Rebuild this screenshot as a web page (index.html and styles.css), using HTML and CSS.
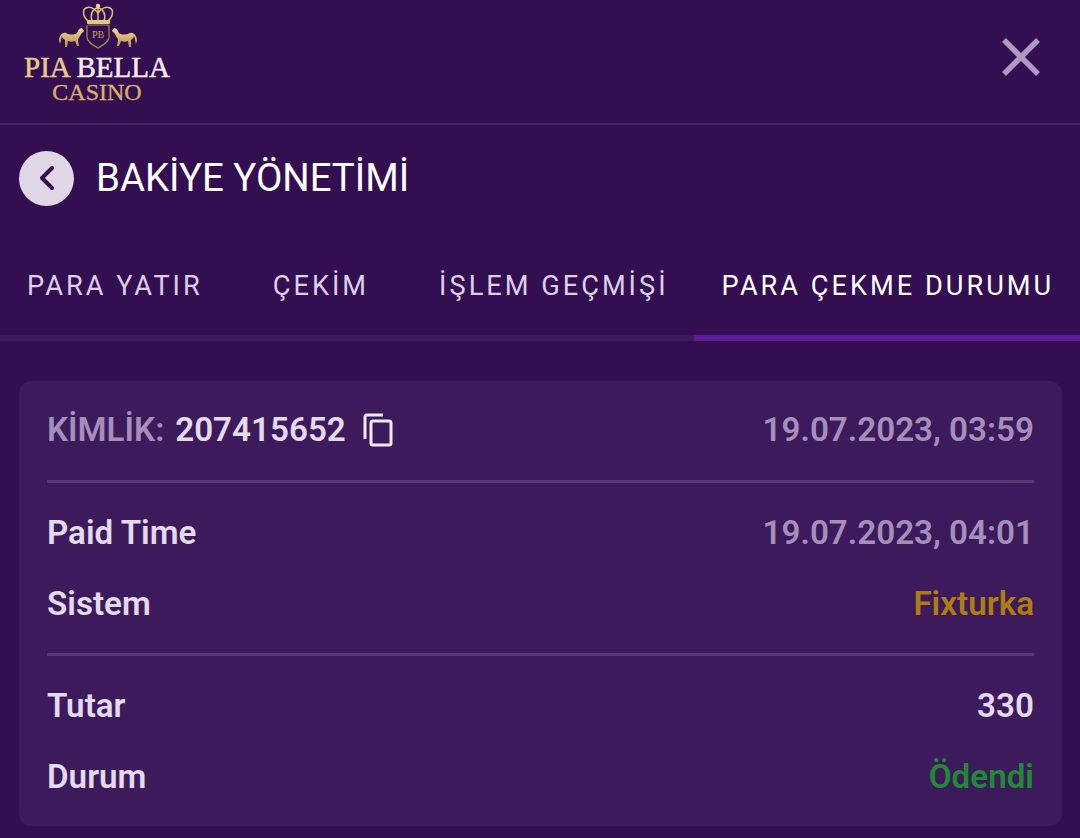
FILE: index.html
```html
<!DOCTYPE html>
<html lang="tr">
<head>
<meta charset="utf-8">
<title>Bakiye Yönetimi</title>
<link rel="stylesheet" href="styles.css">
</head>
<body>
<header class="top">
  <svg class="logo" width="190" height="106" viewBox="0 0 190 106">
    <defs>
      <linearGradient id="gold" x1="0" y1="0" x2="0" y2="1">
        <stop offset="0" stop-color="#f3d592"/>
        <stop offset="1" stop-color="#b98f4c"/>
      </linearGradient>
    </defs>
    <g fill="none" stroke="#e2bd74" stroke-width="1.5">
      <path d="M88 21 C83 17 82 10 86 8 C90 6 94 8 98 13 C102 8 106 6 110 8 C114 10 113 17 108 21"/>
      <path d="M92 21 C90 15 92 9 98 8 C104 9 106 15 104 21"/>
      <path d="M98 21 V8"/>
      <path d="M88 25 H109 V37 C109 42 103 45 98 48 C93 45 87 42 87 37 V25" stroke="#a98548" stroke-width="1.2"/>
    </g>
    <circle cx="98" cy="6" r="2.2" fill="#f0cf8a"/>
    <rect x="87" y="20" width="23" height="4" rx="1" fill="#e9c67f"/>
    <text class="logo-pb" x="98" y="38" text-anchor="middle">PB</text>
    <path fill="url(#gold)" d="M59 41 C59 36 62 32 66 33 C70 35 74 35 77 33 C78 31 79 28 82 28 L84 31 L81 34 C80 37 78 38 78 40 L79 46 L77 46 L75 41 C72 42 70 42 68 41 L67 47 L65 47 L65 40 C63 39 62 37 62 36 C61 38 61 42 60 44 Z"/>
    <path fill="url(#gold)" d="M137 41 C137 36 134 32 130 33 C126 35 122 35 119 33 C118 31 117 28 114 28 L112 31 L115 34 C116 37 118 38 118 40 L117 46 L119 46 L121 41 C124 42 126 42 128 41 L129 47 L131 47 L131 40 C133 39 134 37 134 36 C135 38 135 42 136 44 Z"/>
    <text class="logo-main" x="24" y="77"><tspan class="gold">PIA</tspan> <tspan class="white">BELLA</tspan></text>
    <text class="logo-sub" x="97" y="100" text-anchor="middle">CASINO</text>
  </svg>
  <svg class="close" width="40" height="40" viewBox="0 0 40 40">
    <path d="M3 3 L37 37 M37 3 L3 37" stroke="#ae9ac2" stroke-width="5.5" fill="none"/>
  </svg>
</header>

<div class="title-row">
  <span class="back">
    <svg width="24" height="30" viewBox="0 0 24 30">
      <path d="M17 5 L7 15 L17 25" stroke="#330f52" stroke-width="4" stroke-linecap="round" stroke-linejoin="round" fill="none"/>
    </svg>
  </span>
  <h1 class="title">BAKİYE YÖNETİMİ</h1>
</div>

<nav class="tabs">
  <span class="tab tab-first">PARA YATIR</span>
  <span class="tab tab-mid">ÇEKİM</span>
  <span class="tab tab-third">İŞLEM GEÇMİŞİ</span>
  <span class="tab tab-active">PARA ÇEKME DURUMU</span>
</nav>

<main class="card">
  <section class="group group-head">
    <div class="row">
      <span class="id-wrap">
        <span class="muted">KİMLİK:</span>
        <span class="light">207415652</span>
        <svg class="copy" width="30" height="34" viewBox="0 0 30 34">
          <path d="M2 26 V4 Q2 2 4 2 H20" fill="none" stroke="#f1eaf6" stroke-width="3"/>
          <rect x="8" y="8" width="20" height="24" rx="2" fill="none" stroke="#f1eaf6" stroke-width="3"/>
        </svg>
      </span>
      <span class="muted">19.07.2023, 03:59</span>
    </div>
  </section>
  <section class="group">
    <div class="row">
      <span class="light">Paid Time</span>
      <span class="muted">19.07.2023, 04:01</span>
    </div>
    <div class="row">
      <span class="light">Sistem</span>
      <span class="amber">Fixturka</span>
    </div>
  </section>
  <section class="group group-last">
    <div class="row">
      <span class="light">Tutar</span>
      <span class="light">330</span>
    </div>
    <div class="row">
      <span class="light">Durum</span>
      <span class="green">Ödendi</span>
    </div>
  </section>
</main>
</body>
</html>
```
FILE: styles.css
```css
* { box-sizing: border-box; }
html, body { margin: 0; height: 100%; }
body {
  background: #330f52;
  font-family: Roboto, "Liberation Sans", sans-serif;
  width: 1080px;
  height: 838px;
  overflow: hidden;
}
.top {
  height: 125px;
  border-bottom: 2px solid #47265f;
  display: flex;
  justify-content: space-between;
  align-items: flex-start;
  padding: 0 39px 0 0;
}
.logo { display: block; }
.logo-main { font-family: "Liberation Serif", serif; font-size: 29px; stroke-width: 0.5px; }
.gold { fill: #e8c98c; stroke: #e8c98c; }
.white { fill: #f4ecf4; stroke: #f4ecf4; }
.logo-sub { font-family: "Liberation Serif", serif; font-size: 24px; fill: #d9b06a; stroke: #d9b06a; stroke-width: 0.3px; }
.logo-pb { font-family: "Liberation Serif", serif; font-size: 10px; fill: #c7a263; }
.close { margin-top: 37px; }
.title-row {
  display: flex;
  align-items: center;
  gap: 22px;
  padding: 25px 0 0 19px;
  height: 81px;
}
.back {
  width: 55px;
  height: 55px;
  border-radius: 50%;
  background: #dfd6e6;
  display: flex;
  align-items: center;
  justify-content: center;
}
.title {
  margin: 0;
  font-size: 38.4px;
  font-weight: 400;
  color: #fff;
  line-height: 56px;
}
.tabs {
  display: flex;
  margin-top: 30px;
  height: 105px;
}
.tab {
  height: 105px;
  padding-top: 21px;
  line-height: 58px;
  font-size: 27.2px;
  letter-spacing: 3px;
  color: #dccfe8;
  border-bottom: 6px solid #3d1c5b;
  white-space: nowrap;
}
.tab-first { padding-left: 27px; padding-right: 34px; }
.tab-mid { padding-left: 36px; padding-right: 34px; }
.tab-third { padding-left: 36px; padding-right: 25px; }
.tab-active {
  flex: 1;
  padding-left: 28px;
  color: #fff;
  border-bottom-color: #5e1b99;
}
.card {
  margin: 40px 18px 0 19px;
  height: 445px;
  background: #3c1a5b;
  border-radius: 12px;
  padding: 13px 28px 0;
}
.group { border-bottom: 3px solid #533a72; }
.group-head { height: 89px; }
.group-last { border-bottom: none; }
.group:not(.group-head) { padding-top: 14px; }
.group:not(.group-head):not(.group-last) { height: 173px; }
.row {
  display: flex;
  justify-content: space-between;
  align-items: center;
  height: 71px;
  font-size: 33.2px;
  font-weight: 600;
}
.id-wrap { display: flex; align-items: center; gap: 11px; }
.muted { color: #a48fbb; }
.light { color: #e3daee; }
.amber { color: #ad7d10; }
.green { color: #1f8a35; }
.copy { margin-left: 6px; }
```
